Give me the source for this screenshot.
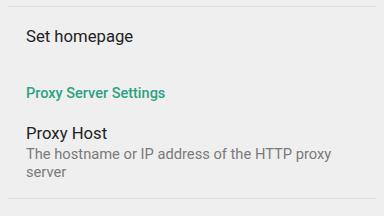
export default function App() {
  return (
    <div
      className="w-[384px] h-[216px] overflow-hidden bg-[#efefef]"
      style={{ fontFamily: 'Roboto, "Noto Sans", sans-serif' }}
    >
      <div className="pt-[6px] px-[8px]">
        <div className="h-px bg-[#dcdcdc]" />
      </div>

      {/* Set homepage */}
      <div className="pl-[26px] pt-[18px] h-[75px]">
        <p className="text-[16.7px] leading-[24px] text-[#222222]">Set homepage</p>
      </div>

      {/* Section header */}
      <div className="pl-[26px]">
        <p className="text-[14.5px] leading-[24px] font-medium text-[#2ba283]">
          Proxy Server Settings
        </p>
      </div>

      {/* Proxy Host */}
      <div className="pl-[26px] pr-[26px] pt-[16px] pb-[17px]">
        <p className="text-[16.7px] leading-[23px] text-[#222222]">Proxy Host</p>
        <p className="text-[14.7px] leading-[18px] text-[#7a7a7a] w-[330px]">
          The hostname or IP address of the HTTP proxy server
        </p>
      </div>

      <div className="px-[8px]">
        <div className="h-px bg-[#dcdcdc]" />
      </div>
    </div>
  )
}
